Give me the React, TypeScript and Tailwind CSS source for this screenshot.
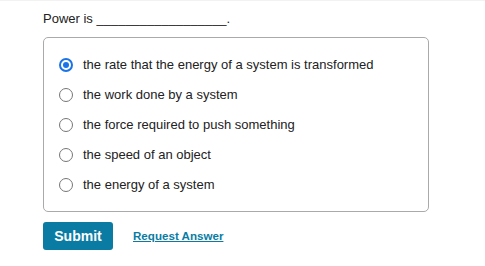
import React from 'react';

const options = [
  'the rate that the energy of a system is transformed',
  'the work done by a system',
  'the force required to push something',
  'the speed of an object',
  'the energy of a system',
];

function Radio({ checked }: { checked: boolean }) {
  if (checked) {
    return (
      <span className="flex h-[14px] w-[14px] shrink-0 items-center justify-center rounded-full border-2 border-[#1a73e8] bg-white">
        <span className="h-[6px] w-[6px] rounded-full bg-[#1a73e8]" />
      </span>
    );
  }
  return <span className="h-[14px] w-[14px] shrink-0 rounded-full border border-[#767676] bg-white" />;
}

export default function App() {
  const selected = 0;
  return (
    <div
      className="min-h-[266px] w-full border-t border-[#f2f2f2] bg-white pl-[43px] pt-[10px] text-[13px] text-[#222]"
      style={{ fontFamily: '"Liberation Sans", Arial, sans-serif' }}
    >
      <p className="leading-[16px]">Power is __________________.</p>

      <div className="mt-[10px] w-[386px] rounded-[5px] border border-[#aaa] pb-[11px] pl-[15px] pt-[12px]">
        {options.map((opt, i) => (
          <label key={i} className="flex h-[30px] items-center gap-[10px]">
            <Radio checked={i === selected} />
            <span>{opt}</span>
          </label>
        ))}
      </div>

      <div className="mt-[10px] flex items-center gap-[20px]">
        <button className="h-[28px] w-[70px] rounded-[3px] bg-[#0a7ca3] text-[14px] font-bold text-white">
          Submit
        </button>
        <a href="#" className="text-[11.6px] font-bold text-[#0a7ca3] underline">
          Request Answer
        </a>
      </div>
    </div>
  );
}
